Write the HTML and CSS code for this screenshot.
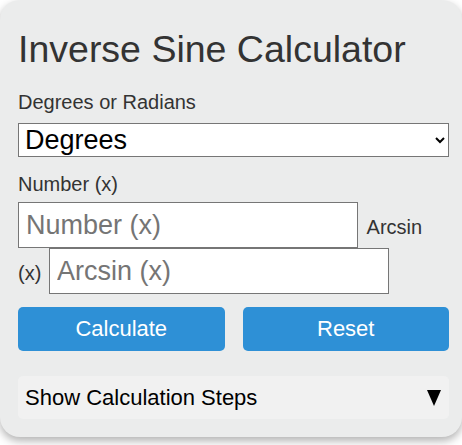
FILE: index.html
```html
<!DOCTYPE html>
<html lang="en">
<head>
    <meta charset="UTF-8">
    <meta name="viewport" content="width=device-width, initial-scale=1.0">
    <title>Inverse Sine Calculator</title>
    <link rel="stylesheet" href="styles.css">
</head>
<body>
    <div class="calculator">
        <h1>Inverse Sine Calculator</h1>

        <label class="field-label" for="unit">Degrees or Radians</label>
        <select id="unit" class="unit-select">
            <option value="deg">Degrees</option>
            <option value="rad">Radians</option>
        </select>

        <label class="field-label number-label" for="number">Number (x)</label>
        <div class="inputs">
            <input type="number" id="number" placeholder="Number (x)"> <label class="inline-label" for="arcsin">Arcsin (x)</label> <input type="number" id="arcsin" placeholder="Arcsin (x)">
        </div>

        <div class="buttons">
            <button type="button" onclick="calculate()">Calculate</button>
            <button type="button" onclick="resetForm()">Reset</button>
        </div>

        <div class="steps">
            <div class="steps-toggle" onclick="toggleSteps()">
                <span>Show Calculation Steps</span>
                <svg class="arrow" width="14" height="16" viewBox="0 0 14 16"><polygon points="0,0 14,0 7,16" fill="#000"/></svg>
            </div>
            <div id="stepsText" class="steps-text">Enter a number between -1 and 1.</div>
        </div>
    </div>

    <script>
        function calculate() {
            const x = parseFloat(document.getElementById('number').value);
            const unit = document.getElementById('unit').value;
            const out = document.getElementById('arcsin');
            const steps = document.getElementById('stepsText');

            if (isNaN(x) || x < -1 || x > 1) {
                out.value = '';
                steps.textContent = 'x must be between -1 and 1.';
                return;
            }

            let result = Math.asin(x);
            if (unit === 'deg') {
                result = result * 180 / Math.PI;
            }
            out.value = result.toFixed(4);
            steps.textContent = 'arcsin(' + x + ') = ' + result.toFixed(4) + (unit === 'deg' ? '°' : ' rad');
        }

        function resetForm() {
            document.getElementById('number').value = '';
            document.getElementById('arcsin').value = '';
            document.getElementById('stepsText').textContent = 'Enter a number between -1 and 1.';
        }

        function toggleSteps() {
            document.getElementById('stepsText').classList.toggle('open');
        }
    </script>
</body>
</html>
```

FILE: styles.css
```css
body {
    margin: 0;
    min-height: 445px;
    background-color: #fff;
    font-family: "Liberation Sans", Arial, sans-serif;
    overflow: hidden;
}
.calculator {
    width: 462px;
    height: 437px;
    box-sizing: border-box;
    padding: 28px 13px 17px 18px;
    background: #ebecec;
    border-radius: 20px;
    box-shadow: 0px 4px 9px rgba(0, 0, 0, 0.3);
    color: #333;
}
h1 {
    margin: 0 0 20px 0;
    font-size: 37.5px;
    font-weight: normal;
    line-height: 43px;
    color: #333;
}
.field-label {
    display: block;
    font-size: 20px;
    line-height: 23px;
}
.unit-select {
    display: block;
    width: 100%;
    height: 34px;
    margin: 9px 0 16px 0;
    padding: 0 2px;
    font-family: "Liberation Sans", Arial, sans-serif;
    font-size: 27px;
    color: #000;
    background: #fff;
    border: 1px solid #767676;
    border-radius: 0;
}
.number-label {
    margin-bottom: 6px;
}
.inputs {
    font-size: 20px;
    line-height: 23px;
}
.inputs input {
    width: 340px;
    height: 46px;
    box-sizing: border-box;
    margin: 0;
    padding: 6px 7px;
    font-family: "Liberation Sans", Arial, sans-serif;
    font-size: 27px;
    border: 1px solid #767676;
    border-radius: 0;
    background: #fff;
}
.inputs input::placeholder {
    color: #757575;
}
.inline-label {
    margin: 0 2px 0 3px;
}
.buttons {
    display: flex;
    gap: 18px;
    margin-top: 13px;
}
.buttons button {
    flex: 1;
    height: 44px;
    border: none;
    border-radius: 5px;
    background-color: #2e90d6;
    color: #fff;
    font-family: "Liberation Sans", Arial, sans-serif;
    font-size: 22px;
}
.steps {
    margin-top: 25px;
    background: #f1f1f1;
    border-radius: 5px;
}
.steps-toggle {
    display: flex;
    justify-content: space-between;
    align-items: center;
    height: 43px;
    padding: 0 8px 0 7px;
    font-size: 22px;
    color: #000;
    cursor: pointer;
}
.steps-text {
    display: none;
    padding: 8px;
    font-size: 18px;
}
.steps-text.open {
    display: block;
}
```
